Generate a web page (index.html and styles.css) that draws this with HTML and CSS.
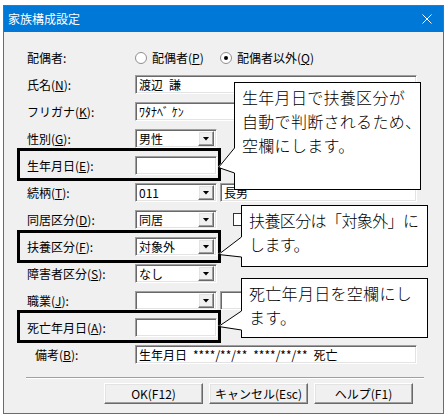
FILE: index.html
```html
<!DOCTYPE html>
<html lang="ja">
<head>
<meta charset="utf-8">
<title>家族構成設定</title>
<link rel="stylesheet" href="styles.css">
</head>
<body>
<div class="window">
  <div class="titlebar">
    <span class="title">家族構成設定</span>
    <svg class="close" width="10" height="10" viewBox="0 0 10 10"><path d="M0.5 0.5L9.5 9.5M9.5 0.5L0.5 9.5" stroke="#fff" stroke-width="1" fill="none"/></svg>
  </div>
  <div class="form">
    <div class="row">
      <span class="label">配偶者:</span>
      <span class="radio"></span><span class="rtext">配偶者(<u>P</u>)</span>
      <span class="radio checked"></span><span class="rtext2">配偶者以外(<u>Q</u>)</span>
    </div>
    <div class="row">
      <span class="label">氏名(<u>N</u>):</span>
      <span class="field w282">渡辺&ensp;謙</span>
    </div>
    <div class="row">
      <span class="label">フリガナ(<u>K</u>):</span>
      <span class="field w150">ﾜﾀﾅﾍﾞ ｹﾝ</span>
    </div>
    <div class="row">
      <span class="label">性別(<u>G</u>):</span>
      <span class="field combo w82"><span>男性</span><span class="drop"></span></span>
    </div>
    <div class="row">
      <span class="label">生年月日(<u>E</u>):</span>
      <span class="field w82"></span>
    </div>
    <div class="row">
      <span class="label">続柄(<u>T</u>):</span>
      <span class="field combo w82"><span>011</span><span class="drop"></span></span>
      <span class="field w197">長男</span>
    </div>
    <div class="row">
      <span class="label">同居区分(<u>D</u>):</span>
      <span class="field combo w82"><span>同居</span><span class="drop"></span></span>
      <span class="check"></span>
    </div>
    <div class="row">
      <span class="label">扶養区分(<u>F</u>):</span>
      <span class="field combo w82"><span>対象外</span><span class="drop"></span></span>
    </div>
    <div class="row">
      <span class="label">障害者区分(<u>S</u>):</span>
      <span class="field combo w82"><span>なし</span><span class="drop"></span></span>
    </div>
    <div class="row">
      <span class="label">職業(<u>J</u>):</span>
      <span class="field combo w82"><span></span><span class="drop"></span></span>
      <span class="field w197"></span>
    </div>
    <div class="row">
      <span class="label">死亡年月日(<u>A</u>):</span>
      <span class="field w82"></span>
    </div>
    <div class="row">
      <span class="label indent">備考(<u>B</u>):</span>
      <span class="field w282">生年月日&ensp;****/**/**&ensp;****/**/**&ensp;死亡</span>
    </div>
  </div>
  <div class="separator"></div>
  <div class="buttons">
    <span class="btn">OK(F12)</span>
    <span class="btn">キャンセル(Esc)</span>
    <span class="btn">ヘルプ(F1)</span>
  </div>

  <div class="hl hl1"></div>
  <div class="hl hl2"></div>
  <div class="hl hl3"></div>

  <div class="callout c1">
    <svg class="tail" width="27" height="108" viewBox="0 0 27 108">
      <polygon points="25,66 9,85 25,91 26.5,91 26.5,66" fill="#fff"/>
      <polyline points="25.5,66 9.5,85.5 25.5,91" fill="none" stroke="#000" stroke-width="1"/>
    </svg>
    <p>生年月日で扶養区分が<br>自動で判断されるため、<br>空欄にします。</p>
  </div>
  <div class="callout c2">
    <svg class="tail" width="27" height="62" viewBox="0 0 27 62">
      <polygon points="25,32 2,49 25,52 26.5,52 26.5,32" fill="#fff"/>
      <polyline points="25.5,32 2.5,49.5 25.5,52" fill="none" stroke="#000" stroke-width="1"/>
    </svg>
    <p class="tight">扶養区分は「対象外」に<br>します。</p>
  </div>
  <div class="callout c3">
    <svg class="tail" width="27" height="60" viewBox="0 0 27 60">
      <polygon points="25,33 2,48 25,52 26.5,52 26.5,33" fill="#fff"/>
      <polyline points="25.5,33 2.5,48.5 25.5,52" fill="none" stroke="#000" stroke-width="1"/>
    </svg>
    <p>死亡年月日を空欄にし<br>ます。</p>
  </div>
</div>
</body>
</html>
```

FILE: styles.css
```css
html, body {
  margin: 0;
  padding: 0;
  background: #ffffff;
}

body {
  font-family: "Noto Sans CJK JP", "Noto Sans", sans-serif;
  font-size: 12px;
  color: #000;
}

u {
  text-decoration: underline;
  text-underline-offset: 1px;
}

.window {
  position: relative;
  box-sizing: border-box;
  width: 441px;
  height: 409px;
  margin: 5px 0 0 3px;
  border: 1px solid #1a7fd6;
  background: #f0f0f0;
}

.titlebar {
  height: 26px;
  background: #0078d7;
  color: #fff;
  display: flex;
  align-items: center;
  justify-content: space-between;
  padding: 0 11px 0 4px;
}

.title {
  font-size: 12px;
  line-height: 26px;
}

.close {
  display: block;
}

.form {
  padding: 12px 0 0 23px;
}

.row {
  display: flex;
  align-items: center;
  height: 27px;
}

.label {
  flex: none;
  width: 108px;
  white-space: nowrap;
}

.label.indent {
  padding-left: 8px;
  width: 100px;
}

.radio {
  position: relative;
  flex: none;
  box-sizing: border-box;
  width: 12px;
  height: 12px;
  border-radius: 50%;
  border: 1px solid #8f8f8f;
  background: #fff;
  margin-right: 5px;
}

.radio.checked::after {
  content: "";
  position: absolute;
  left: 3px;
  top: 3px;
  width: 4px;
  height: 4px;
  border-radius: 50%;
  background: #000;
}

.rtext {
  width: 68px;
  white-space: nowrap;
}

.rtext2 {
  white-space: nowrap;
}

.field {
  flex: none;
  box-sizing: border-box;
  height: 19px;
  background: #fff;
  border: 1px solid;
  border-color: #a0a0a0 #ffffff #ffffff #a0a0a0;
  box-shadow: inset 1px 1px 0 #696969, inset -1px -1px 0 #e3e3e3;
  padding: 0 2px 0 3px;
  line-height: 17px;
  font-size: 12px;
  white-space: nowrap;
  overflow: hidden;
}

.combo {
  display: flex;
  align-items: center;
  justify-content: space-between;
  padding-right: 2px;
}

.drop {
  flex: none;
  box-sizing: border-box;
  width: 16px;
  height: 15px;
  background: #f0f0f0;
  border: 1px solid;
  border-color: #ffffff #696969 #696969 #ffffff;
  box-shadow: inset -1px -1px 0 #a0a0a0, inset 1px 1px 0 #e3e3e3;
  display: flex;
  align-items: center;
  justify-content: center;
}

.drop::after {
  content: "";
  width: 7px;
  height: 4px;
  background: #000;
  clip-path: polygon(0 0, 100% 0, 50% 100%);
}

.w82 { width: 82px; }
.w150 { width: 150px; }
.w282 { width: 282px; }
.w197 { width: 197px; margin-left: 3px; }

.check {
  flex: none;
  box-sizing: border-box;
  width: 13px;
  height: 13px;
  margin-left: 16px;
  background: #fff;
  border: 1px solid #333;
}

.separator {
  margin: 9px 0 0 22px;
  width: 398px;
  height: 1px;
  background: #a0a0a0;
  border-bottom: 1px solid #fff;
}

.buttons {
  display: flex;
  gap: 6px;
  padding-left: 100px;
  margin-top: 4px;
}

.btn {
  box-sizing: border-box;
  width: 99px;
  height: 21px;
  background: #f0f0f0;
  border: 1px solid;
  border-color: #ffffff #696969 #696969 #ffffff;
  box-shadow: inset -1px -1px 0 #a0a0a0, inset 1px 1px 0 #e3e3e3;
  text-align: center;
  line-height: 19px;
  font-size: 12px;
  white-space: nowrap;
}

.hl {
  position: absolute;
  left: 13px;
  width: 204px;
  height: 33px;
  box-sizing: border-box;
  border: 3px solid #000;
}

.hl1 { top: 142px; }
.hl2 { top: 224px; }
.hl3 { top: 304px; }

.callout {
  position: absolute;
  box-sizing: border-box;
  background: #fff;
  border: 1px solid #000;
  width: 187px;
}

.callout p {
  margin: 0;
  padding: 2px 0 0 7px;
  font-size: 16px;
  font-weight: 300;
  line-height: 24px;
  letter-spacing: 0.3px;
  white-space: nowrap;
}

.callout p.tight {
  letter-spacing: -0.6px;
}

.tail {
  position: absolute;
  left: -26px;
  top: -1px;
  overflow: visible;
}

.c1 { left: 230px; top: 76px; height: 108px; }
.c2 { left: 237px; top: 199px; height: 62px; }
.c3 { left: 237px; top: 272px; height: 60px; }
```
